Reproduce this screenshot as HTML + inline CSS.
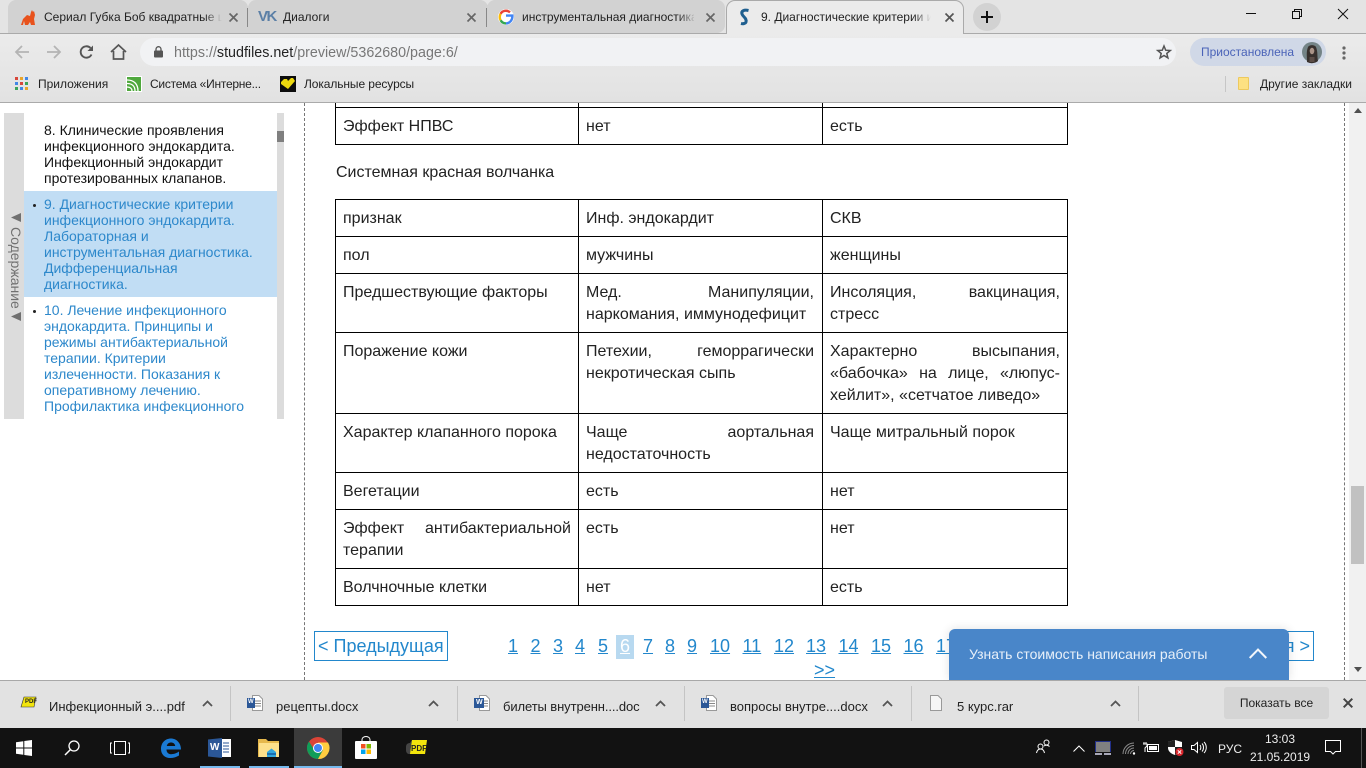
<!DOCTYPE html>
<html lang="ru"><head><meta charset="utf-8"><title>9. Диагностические критерии</title>
<style>
html,body{margin:0;padding:0;width:1366px;height:768px;overflow:hidden;background:#fff;font-family:"Liberation Sans",sans-serif}
.a{position:absolute;white-space:nowrap}
svg{position:absolute;overflow:visible}
.ui{font-size:12px;color:#222;line-height:16px}
.tab{font-size:12px;line-height:16px;color:#222;overflow:hidden;top:9px}
.fade{position:absolute;top:3px;width:18px;height:24px}
.v{position:absolute;background:#000;width:1px}
.h{position:absolute;background:#000;height:1px;left:335px;width:733px}
.c{position:absolute;margin-top:2px;font-size:16px;line-height:22px;color:#222;text-align:justify}
.s{position:absolute;left:44px;font-size:14px;line-height:16px;white-space:nowrap}
.p{position:absolute;top:636px;font-size:18px;line-height:21px;color:#2287cc;text-decoration:underline;white-space:nowrap}
.dl{position:absolute;top:699px;font-size:13px;line-height:16px;color:#222;white-space:nowrap}
.sep{position:absolute;top:686px;width:1px;height:35px;background:#c4c4c4}
</style></head><body>

<!-- tab strip -->
<div class="a" style="left:0;top:0;width:1366px;height:33px;background:#e4e4e4"></div>
<div class="a" style="left:8px;top:0;width:240px;height:33px;background:#d2d2d2;border-radius:8px 8px 0 0"></div>
<div class="a" style="left:248px;top:0;width:240px;height:33px;background:#d2d2d2;border-radius:8px 8px 0 0"></div>
<div class="a" style="left:487px;top:0;width:238px;height:33px;background:#d2d2d2;border-radius:8px 8px 8px 0"></div>
<div class="a" style="left:0;top:33px;width:1366px;height:1px;background:#aaa"></div>
<div class="a" style="left:726px;top:0;width:238px;height:38px;background:#ebebeb;border:1px solid #aaa;border-bottom:0;border-radius:9px 9px 0 0;box-sizing:border-box"></div>
<div class="a" style="left:247px;top:8px;width:1px;height:19px;background:#888"></div>
<div class="a" style="left:486px;top:8px;width:1px;height:19px;background:#888"></div>

<svg style="left:20px;top:9px" width="16" height="17" viewBox="0 0 16 17"><path d="M1 16L3 10L7 6L10 7L11 3L12 1L13 3L14 2L15 6L14 10L15 16H11L10 13L8 16H5L4 12L3 16Z" fill="#e8521c"/></svg>
<div class="a tab" style="left:44px;width:178px">Сериал Губка Боб квадратные шт</div>
<div class="fade" style="left:204px;background:linear-gradient(90deg,rgba(210,210,210,0),#d2d2d2)"></div>
<svg style="left:229px;top:13px" width="9" height="9"><path d="M.5.5L8.5 8.5M8.5.5L.5 8.5" stroke="#666" stroke-width="1.7"/></svg>

<div class="a" style="left:258px;top:9px;font:bold 15px/16px 'Liberation Sans',sans-serif;color:#5b7fa6;letter-spacing:-1.500px">VK</div>
<div class="a tab" style="left:283px">Диалоги</div>
<svg style="left:467px;top:13px" width="9" height="9"><path d="M.5.5L8.5 8.5M8.5.5L.5 8.5" stroke="#666" stroke-width="1.7"/></svg>

<div class="a" style="left:498px;top:9px;width:16px;height:16px;background:#fff;border-radius:50%"></div>
<svg style="left:498px;top:9px" width="16" height="16" viewBox="0 0 16 16"><path d="M8 6.6H14.4C14.7 10.6 12 14.4 8 14.4" fill="none" stroke="#4285f4" stroke-width="2.4"/><path d="M8 14.4C5.6 14.4 3.6 13.2 2.6 11.2" fill="none" stroke="#34a853" stroke-width="2.4"/><path d="M2.6 11.2C1.4 9 1.4 7 2.6 4.8" fill="none" stroke="#fbbc05" stroke-width="2.4"/><path d="M2.6 4.8C4.4 1.6 9 .6 12 3.4" fill="none" stroke="#ea4335" stroke-width="2.4"/></svg>
<div class="a tab" style="left:522px;width:172px">инструментальная диагностика</div>
<div class="fade" style="left:678px;background:linear-gradient(90deg,rgba(210,210,210,0),#d2d2d2)"></div>
<svg style="left:706px;top:13px" width="9" height="9"><path d="M.5.5L8.5 8.5M8.5.5L.5 8.5" stroke="#666" stroke-width="1.7"/></svg>

<svg style="left:739px;top:9px" width="11" height="16" viewBox="0 0 11 16"><path d="M9.5 1.5C5 .5 2 2 3 5C4 8 8 9 7 13C6.600 14.500 4 15 2 14.500" fill="none" stroke="#1f5f8f" stroke-width="3"/></svg>
<div class="a tab" style="left:761px;width:170px">9. Диагностические критерии инф</div>
<div class="fade" style="left:913px;background:linear-gradient(90deg,rgba(235,235,235,0),#ebebeb)"></div>
<svg style="left:945px;top:13px" width="9" height="9"><path d="M.5.5L8.5 8.5M8.5.5L.5 8.5" stroke="#555" stroke-width="1.7"/></svg>

<div class="a" style="left:973px;top:3px;width:28px;height:28px;border-radius:50%;background:#d2d2d2"></div>
<svg style="left:981px;top:11px" width="12" height="12"><path d="M6 0V12M0 6H12" stroke="#111" stroke-width="2"/></svg>

<svg style="left:1246px;top:13px" width="10" height="2"><path d="M0 .5H10" stroke="#111"/></svg>
<svg style="left:1292px;top:9px" width="10" height="10"><path d="M.5 2.500H7.500V9.500H.5ZM2.500 2.500V.5H9.500V7.500H7.500" fill="none" stroke="#111"/></svg>
<svg style="left:1338px;top:9px" width="10" height="10"><path d="M0 0L10 10M10 0L0 10" stroke="#111"/></svg>

<!-- toolbar -->
<div class="a" style="left:0;top:34px;width:1366px;height:68px;background:linear-gradient(#ebebeb,#e2e2e2)"></div>
<div class="a" style="left:0;top:102px;width:1366px;height:1px;background:#aaa"></div>
<svg style="left:15px;top:45px" width="14" height="14"><path d="M14 7H1.500M7 1L1 7L7 13" fill="none" stroke="#b4b4b4" stroke-width="1.800"/></svg>
<svg style="left:47px;top:45px" width="14" height="14"><path d="M0 7H12.500M7 1L13 7L7 13" fill="none" stroke="#b4b4b4" stroke-width="1.800"/></svg>
<svg style="left:79px;top:45px" width="15" height="14" viewBox="0 0 15 14"><path d="M12.500 9.500A5.700 5.700 0 1 1 11.500 3" fill="none" stroke="#555" stroke-width="1.900"/><path d="M8.500 6H14V.5Z" fill="#555"/></svg>
<svg style="left:110px;top:44px" width="17" height="16" viewBox="0 0 17 16"><path d="M1 8L8.500 1L16 8M3.500 7V15H13.500V7" fill="none" stroke="#555" stroke-width="1.700"/></svg>
<div class="a" style="left:140px;top:38px;width:1036px;height:28px;background:#f1f2f4;border-radius:14px"></div>
<svg style="left:154px;top:46px" width="9" height="12"><rect y="4.500" width="9" height="7" rx="1" fill="#555"/><path d="M2 5V3.200A2.500 2.500 0 0 1 7 3.200V5" fill="none" stroke="#555" stroke-width="1.300"/></svg>
<div class="a" style="left:174px;top:44px;font-size:14.300px;line-height:18px;color:#777"><span>https://</span><span style="color:#222">studfiles.net</span>/preview/5362680/page:6/</div>
<svg style="left:1157px;top:45px" width="14" height="14" viewBox="0 0 14 14"><path d="M7 1L8.700 5.200L13.300 5.500L9.800 8.400L10.900 12.900L7 10.500L3.100 12.900L4.200 8.400L.7 5.500L5.300 5.200Z" fill="none" stroke="#555" stroke-width="1.500"/></svg>
<div class="a" style="left:1190px;top:38px;width:136px;height:28px;background:#d0d8e7;border-radius:14px"></div>
<div class="a" style="left:1201px;top:44px;font-size:12px;line-height:16px;color:#4a63b8">Приостановлена</div>
<svg style="left:1302px;top:42px" width="20" height="20" viewBox="0 0 20 20"><circle cx="10" cy="10" r="10" fill="#748487"/><path d="M5 20C5 14 4 10 6 5C7.500 2.500 12.500 2.500 14 5C16 10 15 14 16 19A10 10 0 0 1 5 20Z" fill="#37302d"/><ellipse cx="10" cy="9" rx="2.300" ry="3.200" fill="#a99387"/><path d="M7.500 20V15H12.500V20Z" fill="#5b4d47"/></svg>
<svg style="left:1342px;top:46px" width="4" height="14"><circle cx="2" cy="2" r="1.600" fill="#666"/><circle cx="2" cy="7" r="1.600" fill="#666"/><circle cx="2" cy="12" r="1.600" fill="#666"/></svg>

<!-- bookmarks -->
<svg style="left:15px;top:77px" width="13" height="13"><g><rect width="3" height="3" fill="#d8473b"/><rect x="5" width="3" height="3" fill="#e9a52a"/><rect x="10" width="3" height="3" fill="#4287e6"/><rect y="5" width="3" height="3" fill="#4287e6"/><rect x="5" y="5" width="3" height="3" fill="#d8473b"/><rect x="10" y="5" width="3" height="3" fill="#3ba55a"/><rect y="10" width="3" height="3" fill="#3ba55a"/><rect x="5" y="10" width="3" height="3" fill="#4287e6"/><rect x="10" y="10" width="3" height="3" fill="#e9a52a"/></g></svg>
<div class="a ui" style="left:38px;top:76px">Приложения</div>
<svg style="left:126px;top:76px" width="16" height="16" viewBox="0 0 16 16"><rect width="16" height="16" fill="#fff"/><rect x="1" y="1" width="14" height="14" fill="#4fa83d"/><path d="M1 4C8 4 12 8 12 15M1 7.500C6 7.500 9 10 9 15M1 11C4 11 6 12.500 6 15" fill="none" stroke="#fff" stroke-width="1.300"/></svg>
<div class="a ui" style="left:150px;top:76px;letter-spacing:-.25px">Система «Интерне...</div>
<div class="a" style="left:280px;top:76px;width:16px;height:16px;background:#0c0c0c"></div>
<svg style="left:281px;top:78px" width="14" height="12" viewBox="0 0 14 12"><path d="M0 4L3 1H6L7 3L10 0H12L14 3L7 11L0 6Z" fill="#ecd80e"/></svg>
<div class="a ui" style="left:304px;top:76px;letter-spacing:-.1px">Локальные ресурсы</div>
<div class="a" style="left:1225px;top:76px;width:1px;height:16px;background:#c6c6c6"></div>
<div class="a" style="left:1238px;top:77px;width:11px;height:13px;background:#fde182;border:1px solid #edc95e;box-sizing:border-box;border-radius:1px"></div>
<div class="a ui" style="left:1260px;top:76px">Другие закладки</div>

<!-- page content -->
<div class="a" style="left:304px;top:103px;width:0;height:577px;border-left:1px dashed #777"></div>
<div class="a" style="left:1344px;top:103px;width:0;height:577px;border-left:1px dashed #777"></div>
<div class="a" style="left:1349px;top:103px;width:17px;height:577px;background:#f1f1f1"></div>
<div class="a" style="left:1351px;top:486px;width:13px;height:78px;background:#c1c1c1"></div>
<svg style="left:1354px;top:108px" width="8" height="5"><path d="M4 0L8 5H0Z" fill="#505050"/></svg>
<svg style="left:1354px;top:667px" width="8" height="5"><path d="M0 0H8L4 5Z" fill="#505050"/></svg>

<!-- sidebar -->
<div class="a" style="left:4px;top:113px;width:20px;height:306px;background:#dcdcdc"></div>
<div class="a" style="left:277px;top:113px;width:7px;height:306px;background:#dcdcdc"></div>
<div class="a" style="left:277px;top:131px;width:7px;height:11px;background:#7f7f7f"></div>
<div class="a" style="left:24px;top:191px;width:253px;height:106px;background:#c1ddf4"></div>
<svg style="left:11px;top:213px" width="10" height="9"><path d="M0 4.500L10 0V9Z" fill="#707070"/></svg>
<div class="a" style="left:9px;top:227px;width:14px;height:80px;font-size:14px;line-height:14px;color:#707070;writing-mode:vertical-rl;white-space:nowrap">Содержание</div>
<svg style="left:11px;top:312px" width="10" height="9"><path d="M0 4.500L10 0V9Z" fill="#707070"/></svg>
<div class="s" style="top:122px;color:#111">8. Клинические проявления<br>инфекционного эндокардита.<br>Инфекционный эндокардит<br>протезированных клапанов.</div>
<div class="a" style="left:33px;top:204px;width:3px;height:3px;border-radius:50%;background:#222"></div>
<div class="s" style="top:196px;color:#2d88cb">9. Диагностические критерии<br>инфекционного эндокардита.<br>Лабораторная и<br>инструментальная диагностика.<br>Дифференциальная<br>диагностика.</div>
<div class="a" style="left:33px;top:310px;width:3px;height:3px;border-radius:50%;background:#222"></div>
<div class="s" style="top:302px;color:#2d88cb">10. Лечение инфекционного<br>эндокардита. Принципы и<br>режимы антибактериальной<br>терапии. Критерии<br>излеченности. Показания к<br>оперативному лечению.<br>Профилактика инфекционного</div>

<!-- table 1 remnant -->
<div class="v" style="left:335px;top:103px;height:42px"></div>
<div class="v" style="left:578px;top:103px;height:42px"></div>
<div class="v" style="left:822px;top:103px;height:42px"></div>
<div class="v" style="left:1067px;top:103px;height:42px"></div>
<div class="h" style="top:107px"></div>
<div class="h" style="top:144px"></div>
<div class="c" style="left:343px;top:114px">Эффект НПВС</div>
<div class="c" style="left:586px;top:114px">нет</div>
<div class="c" style="left:830px;top:114px">есть</div>
<div class="c" style="left:336px;top:160px">Системная красная волчанка</div>

<!-- table 2 -->
<div class="v" style="left:335px;top:199px;height:407px"></div>
<div class="v" style="left:578px;top:199px;height:407px"></div>
<div class="v" style="left:822px;top:199px;height:407px"></div>
<div class="v" style="left:1067px;top:199px;height:407px"></div>
<div class="h" style="top:199px"></div>
<div class="h" style="top:236px"></div>
<div class="h" style="top:273px"></div>
<div class="h" style="top:332px"></div>
<div class="h" style="top:413px"></div>
<div class="h" style="top:472px"></div>
<div class="h" style="top:509px"></div>
<div class="h" style="top:568px"></div>
<div class="h" style="top:605px"></div>

<div class="c" style="left:343px;top:206px">признак</div>
<div class="c" style="left:586px;top:206px">Инф. эндокардит</div>
<div class="c" style="left:830px;top:206px">СКВ</div>
<div class="c" style="left:343px;top:243px">пол</div>
<div class="c" style="left:586px;top:243px">мужчины</div>
<div class="c" style="left:830px;top:243px">женщины</div>
<div class="c" style="left:343px;top:280px">Предшествующие факторы</div>
<div class="c" style="left:586px;top:280px;width:228px">Мед. Манипуляции, наркомания, иммунодефицит</div>
<div class="c" style="left:830px;top:280px;width:230px">Инсоляция, вакцинация, стресс</div>
<div class="c" style="left:343px;top:339px">Поражение кожи</div>
<div class="c" style="left:586px;top:339px;width:228px">Петехии, геморрагически некротическая сыпь</div>
<div class="c" style="left:830px;top:339px;width:230px">Характерно высыпания, «бабочка» на лице, «люпус-хейлит», «сетчатое ливедо»</div>
<div class="c" style="left:343px;top:420px">Характер клапанного порока</div>
<div class="c" style="left:586px;top:420px;width:228px">Чаще аортальная недостаточность</div>
<div class="c" style="left:830px;top:420px">Чаще митральный порок</div>
<div class="c" style="left:343px;top:479px">Вегетации</div>
<div class="c" style="left:586px;top:479px">есть</div>
<div class="c" style="left:830px;top:479px">нет</div>
<div class="c" style="left:343px;top:516px;width:228px">Эффект антибактериальной терапии</div>
<div class="c" style="left:586px;top:516px">есть</div>
<div class="c" style="left:830px;top:516px">нет</div>
<div class="c" style="left:343px;top:575px">Волчночные клетки</div>
<div class="c" style="left:586px;top:575px">нет</div>
<div class="c" style="left:830px;top:575px">есть</div>

<!-- pagination -->
<div class="a" style="left:314px;top:631px;width:134px;height:30px;border:1px solid #2287cc;box-sizing:border-box;font-size:18px;line-height:28px;color:#2287cc;padding-left:3px">&lt; Предыдущая</div>
<div class="a" style="left:616px;top:635px;width:18px;height:24px;background:#b8d9f0"></div>
<div class="p" style="left:508px">1</div>
<div class="p" style="left:530.500px">2</div>
<div class="p" style="left:553px">3</div>
<div class="p" style="left:575px">4</div>
<div class="p" style="left:598px">5</div>
<div class="p" style="left:620px;color:#fff">6</div>
<div class="p" style="left:643px">7</div>
<div class="p" style="left:665px">8</div>
<div class="p" style="left:687px">9</div>
<div class="p" style="left:710px">10</div>
<div class="p" style="left:742.500px">11</div>
<div class="p" style="left:774px">12</div>
<div class="p" style="left:806px">13</div>
<div class="p" style="left:838.500px">14</div>
<div class="p" style="left:871px">15</div>
<div class="p" style="left:903.500px">16</div>
<div class="p" style="left:936px">17</div>
<div class="p" style="left:814px;top:660px">&gt;&gt;</div>
<div class="a" style="left:1180px;top:631px;width:134px;height:30px;border:1px solid #2287cc;box-sizing:border-box;font-size:18px;line-height:28px;color:#2287cc;text-align:right;padding-right:3px">Следующая &gt;</div>

<!-- popup -->
<div class="a" style="left:949px;top:629px;width:340px;height:51px;background:#4986c9;border-radius:6px 6px 0 0;box-shadow:0 0 10px rgba(0,0,0,.12)"></div>
<div class="a" style="left:969px;top:646px;font-size:14px;line-height:17px;color:#e8f0f9">Узнать стоимость написания работы</div>
<svg style="left:1249px;top:648px" width="18" height="11"><path d="M.7 10L9 1.500L17.300 10" fill="none" stroke="#f2f6fb" stroke-width="2"/></svg>

<!-- downloads -->
<div class="a" style="left:0;top:680px;width:1366px;height:48px;background:#e2e2e2;border-top:1px solid #a8a8a8;box-sizing:border-box"></div>
<svg style="left:21px;top:697px" width="15" height="12" viewBox="0 0 15 12"><path d="M3 0H15L13 10H0Z" fill="#f2e40c" stroke="#333" stroke-width=".6"/></svg>
<div class="a" style="left:25px;top:699px;font:bold 6px/7px 'Liberation Sans',sans-serif;color:#222">PDF</div>
<div class="dl" style="left:49px">Инфекционный э....pdf</div>
<svg style="left:202px;top:700px" width="11" height="7"><path d="M1 6L5.500 1.500L10 6" fill="none" stroke="#555" stroke-width="1.800"/></svg>
<div class="sep" style="left:230px"></div>
<svg style="left:247px;top:695px" width="16" height="16" viewBox="0 0 16 16"><path d="M5.500.5H12L15.500 4V15.500H5.500Z" fill="#fff" stroke="#999"/><path d="M8 6H14M8 8.500H14M8 11H14" stroke="#888"/><rect y="3" width="8" height="10" fill="#2b5797"/></svg>
<div class="a" style="left:248px;top:699px;font:bold 6px/7px 'Liberation Sans',sans-serif;color:#fff">W</div>
<div class="dl" style="left:276px">рецепты.docx</div>
<svg style="left:428px;top:700px" width="11" height="7"><path d="M1 6L5.500 1.500L10 6" fill="none" stroke="#555" stroke-width="1.800"/></svg>
<div class="sep" style="left:457px"></div>
<svg style="left:474px;top:695px" width="16" height="16" viewBox="0 0 16 16"><path d="M5.500.5H12L15.500 4V15.500H5.500Z" fill="#fff" stroke="#999"/><path d="M10 6H14M10 8.500H14M10 11H14" stroke="#888"/><rect y="3" width="10" height="10" fill="#2b5797"/></svg>
<div class="a" style="left:476px;top:699px;font:bold 7px/8px 'Liberation Sans',sans-serif;color:#fff">W</div>
<div class="dl" style="left:503px;letter-spacing:-.1px">билеты внутренн....doc</div>
<svg style="left:655px;top:700px" width="11" height="7"><path d="M1 6L5.500 1.500L10 6" fill="none" stroke="#555" stroke-width="1.800"/></svg>
<div class="sep" style="left:684px"></div>
<svg style="left:701px;top:695px" width="16" height="16" viewBox="0 0 16 16"><path d="M5.500.5H12L15.500 4V15.500H5.500Z" fill="#fff" stroke="#999"/><path d="M8 6H14M8 8.500H14M8 11H14" stroke="#888"/><rect y="3" width="8" height="10" fill="#2b5797"/></svg>
<div class="a" style="left:702px;top:699px;font:bold 6px/7px 'Liberation Sans',sans-serif;color:#fff">W</div>
<div class="dl" style="left:730px">вопросы внутре....docx</div>
<svg style="left:882px;top:700px" width="11" height="7"><path d="M1 6L5.500 1.500L10 6" fill="none" stroke="#555" stroke-width="1.800"/></svg>
<div class="sep" style="left:911px"></div>
<svg style="left:930px;top:695px" width="12" height="16" viewBox="0 0 12 16"><path d="M.5.5H8L11.500 4V15.500H.5Z" fill="#f6f6f6" stroke="#999"/></svg>
<div class="dl" style="left:957px">5 курс.rar</div>
<svg style="left:1110px;top:700px" width="11" height="7"><path d="M1 6L5.500 1.500L10 6" fill="none" stroke="#555" stroke-width="1.800"/></svg>
<div class="sep" style="left:1138px"></div>
<div class="a" style="left:1224px;top:687px;width:105px;height:32px;background:#d5d5d5;border-radius:3px;font-size:12px;line-height:32px;text-align:center;color:#222">Показать все</div>
<svg style="left:1343px;top:698px" width="10" height="10"><path d="M.7.7L9.300 9.300M9.300.7L.7 9.300" stroke="#444" stroke-width="2"/></svg>

<!-- taskbar -->
<div class="a" style="left:0;top:728px;width:1366px;height:40px;background:#121212"></div>
<div class="a" style="left:294px;top:728px;width:48px;height:40px;background:#3b3b3b"></div>
<div class="a" style="left:200px;top:766px;width:40px;height:2px;background:#76b9ed"></div>
<div class="a" style="left:249px;top:766px;width:40px;height:2px;background:#76b9ed"></div>
<div class="a" style="left:294px;top:766px;width:48px;height:2px;background:#76b9ed"></div>
<svg style="left:16px;top:740px" width="16" height="16"><path d="M0 2.300L7.300 1.200V7.500H0ZM8.300 1L16 0V7.500H8.300ZM0 8.500H7.300V14.800L0 13.700ZM8.300 8.500H16V16L8.300 15Z" fill="#fff"/></svg>
<svg style="left:64px;top:740px" width="16" height="16"><circle cx="10" cy="6" r="5" fill="none" stroke="#fff" stroke-width="1.300"/><path d="M6.500 9.500L1 15" stroke="#fff" stroke-width="1.500"/></svg>
<svg style="left:110px;top:741px" width="20" height="14"><path d="M4.500.5H15.500V13.500H4.500ZM2 2H.5V12H2M18 2H19.500V12H18" fill="none" stroke="#fff"/></svg>
<svg style="left:161px;top:738px" width="20" height="20" viewBox="0 0 20 20"><path d="M5.500 11.500H20C20 5 15.500 .5 10 .5C4 .5 0 5 0 11C0 16.500 4 20 9 20C12.500 20 15.500 19 18 17.500V13.500C15 15.500 12.500 16.200 10 16.200C7.500 16.200 5.500 14.500 5.500 11.500ZM5.800 8C6.200 5.800 8 4.500 10 4.500C12.200 4.500 14 5.800 14.200 8Z" fill="#1a7ad4"/></svg>
<svg style="left:208px;top:738px" width="23" height="20" viewBox="0 0 23 20"><rect x="7" y="1" width="16" height="18" fill="#fff"/><path d="M15 5H21M15 8H21M15 11H21M15 14H21" stroke="#2b5797"/><path d="M0 1.500L14 0V20L0 18.500Z" fill="#2b5797"/></svg>
<div class="a" style="left:210px;top:743px;font:bold 10px/10px 'Liberation Sans',sans-serif;color:#fff">W</div>
<svg style="left:258px;top:738px" width="22" height="20" viewBox="0 0 22 20"><path d="M0 1H8L10 3H21V19H0Z" fill="#e6b84c"/><path d="M1 5H21V19H1Z" fill="#fde08b"/><path d="M9 19V14L13.500 10.500L18 14V19Z" fill="#32a6dd"/><rect x="9" y="15" width="9" height="2" fill="#1a6fb0"/></svg>
<svg style="left:307px;top:737px" width="22" height="22" viewBox="0 0 22 22"><circle cx="11" cy="11" r="11" fill="#db4437"/><path d="M11 11L1.500 16.500A11 11 0 0 0 11 22L16 13Z" fill="#0f9d58"/><path d="M11 5.500H21A11 11 0 0 1 11 22L16 13Z" fill="#ffcd40"/><path d="M11 11L1.500 16.500A11 11 0 0 1 2 4.500L6 11Z" fill="#0f9d58"/><circle cx="11" cy="11" r="5" fill="#fff"/><circle cx="11" cy="11" r="4" fill="#4285f4"/></svg>
<svg style="left:355px;top:736px" width="22" height="23" viewBox="0 0 22 23"><path d="M7 5V3.500A4 3 0 0 1 15 3.500V5" fill="none" stroke="#fff"/><rect y="5" width="22" height="18" rx="1" fill="#fff"/><rect x="6" y="8" width="4.500" height="4.500" fill="#f25022"/><rect x="11.500" y="8" width="4.500" height="4.500" fill="#7fba00"/><rect x="6" y="13.500" width="4.500" height="4.500" fill="#00a4ef"/><rect x="11.500" y="13.500" width="4.500" height="4.500" fill="#ffb900"/></svg>
<svg style="left:406px;top:740px" width="21" height="16" viewBox="0 0 21 16"><path d="M0 7C0 4 2 3 4 3L6 0H21L19 14H3C1 14 0 12 0 10Z" fill="#444"/><path d="M6 0H21L19 14H4Z" fill="#f2e40c"/></svg>
<div class="a" style="left:411px;top:745px;font:bold 8px/8px 'Liberation Sans',sans-serif;color:#222">PDF</div>

<svg style="left:1036px;top:739px" width="15" height="15" viewBox="0 0 15 15"><circle cx="4.500" cy="7.500" r="2.500" fill="none" stroke="#fff"/><path d="M.5 14C1 11.500 2.500 10 4.500 10S8 11.500 8.500 14" fill="none" stroke="#fff"/><circle cx="10.500" cy="3.500" r="2.500" fill="none" stroke="#fff"/><path d="M8 7C9.500 5.800 12 6 13.500 7.500" fill="none" stroke="#fff"/></svg>
<svg style="left:1073px;top:745px" width="12" height="7"><path d="M.5 6.500L6 1L11.500 6.500" fill="none" stroke="#fff"/></svg>
<div class="a" style="left:1095px;top:741px;width:16px;height:11px;background:#808080;border:1px solid #22308a;border-bottom:0;box-sizing:border-box"></div>
<div class="a" style="left:1095px;top:753px;width:7px;height:2px;background:#a8a8b8"></div>
<div class="a" style="left:1104px;top:753px;width:7px;height:2px;background:#a8a8b8"></div>
<svg style="left:1122px;top:742px" width="14" height="13" viewBox="0 0 14 13"><path d="M1 12A11 11 0 0 1 12 1M3.500 12A8.500 8.500 0 0 1 12 3.500M6 12A6 6 0 0 1 12 6M8.500 12A3.500 3.500 0 0 1 12 8.500" fill="none" stroke="#8a8a8a"/><circle cx="12" cy="11.500" r="1.200" fill="#fff"/></svg>
<svg style="left:1143px;top:741px" width="16" height="13" viewBox="0 0 16 13"><rect x="4.500" y="3.500" width="11" height="7" fill="none" stroke="#fff"/><rect x="6" y="5" width="8" height="4" fill="#fff"/><path d="M1 3V1M3 3V1M0 3H4V5L2 7L2 11" fill="none" stroke="#fff"/></svg>
<svg style="left:1168px;top:740px" width="16" height="17" viewBox="0 0 16 17"><path d="M7 0L14 2V8C14 11 11 14 7 15C3 14 0 11 0 8V2Z" fill="#fff"/><path d="M7 0V7H0V2ZM7 7H14V8C14 9 13.500 10 13 11L7 15Z" fill="#222"/><circle cx="11.500" cy="12" r="4" fill="#d9262c"/><path d="M9.800 10.300L13.200 13.700M13.200 10.300L9.800 13.700" stroke="#fff"/></svg>
<svg style="left:1191px;top:741px" width="16" height="13" viewBox="0 0 16 13"><path d="M.5 4.500H3L6.500 1.500V11.500L3 8.500H.5Z" fill="none" stroke="#fff"/><path d="M9 4C10 5.500 10 7.500 9 9M11 2.500C13 4.500 13 8.500 11 10.500M13 1C16 4 16 9 13 12" fill="none" stroke="#fff"/></svg>
<div class="a" style="left:1218px;top:741px;font-size:12px;line-height:16px;color:#eee">РУС</div>
<div class="a" style="left:1250px;top:730px;width:60px;text-align:center;font-size:12px;line-height:18px;color:#eee">13:03<br>21.05.2019</div>
<svg style="left:1325px;top:740px" width="16" height="15"><path d="M.5.5H15.500V11.500H10.500L8 14L5.500 11.500H.5Z" fill="none" stroke="#fff"/></svg>
<div class="a" style="left:1361px;top:728px;width:1px;height:40px;background:#555"></div>
</body></html>
